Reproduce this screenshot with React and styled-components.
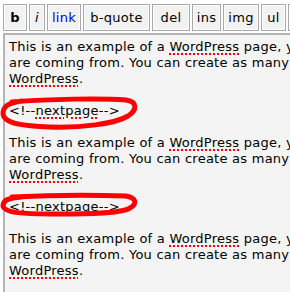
import styled, { createGlobalStyle } from "styled-components";

const GlobalStyle = createGlobalStyle`
  html, body {
    margin: 0;
    padding: 0;
    background: #ffffff;
    overflow: hidden;
  }
`;

const buttons = [
  { label: "b", kind: "bold", width: 24 },
  { label: "i", kind: "italic", width: 16 },
  { label: "link", kind: "link", width: 34 },
  { label: "b-quote", width: 67 },
  { label: "del", width: 38 },
  { label: "ins", width: 29 },
  { label: "img", width: 36 },
  { label: "ul", width: 25 },
  { label: "ol", width: 25 },
];

function Paragraph() {
  return (
    <>
      <Line>
        This is an example of a <Misspelt>WordPress</Misspelt> page, you could edit this
      </Line>
      <Line>are coming from. You can create as many pages like this one</Line>
      <Line>
        <Misspelt>WordPress</Misspelt>.
      </Line>
    </>
  );
}

function NextPage({ tall }) {
  return (
    <Marked>
      <Line>
        &lt;!--<Misspelt>nextpage</Misspelt>--&gt;
      </Line>
      {tall ? (
        <Scribble $top={-7} $h={34} viewBox="0 0 138 34">
          <path d="M12 6 C50 3 100 2 126 4 C138 6 137 14 128 20 C115 28 80 32 50 31 C25 30 4 28 3 18 C3 10 8 7 22 5" />
        </Scribble>
      ) : (
        <Scribble $top={-6} $h={24} viewBox="0 0 138 24">
          <path d="M12 4 C50 2 100 2 126 3 C137 5 137 11 130 15 C120 21 80 21 50 21 C25 21 4 20 3 13 C3 7 8 5 22 4" />
        </Scribble>
      )}
    </Marked>
  );
}

export default function App() {
  return (
    <>
      <GlobalStyle />
      <Page>
        <Toolbar>
          {buttons.map((b) => (
            <Button key={b.label} $kind={b.kind} $w={b.width}>
              {b.label}
            </Button>
          ))}
        </Toolbar>
        <Editor>
          <Paragraph />
          <Blank />
          <NextPage tall />
          <Blank />
          <Paragraph />
          <Blank />
          <NextPage />
          <Blank />
          <Paragraph />
        </Editor>
      </Page>
    </>
  );
}

const Page = styled.div`
  width: 290px;
  height: 292px;
  overflow: hidden;
  padding: 4px 0 0 3px;
  box-sizing: border-box;
  font-family: "DejaVu Sans", Verdana, sans-serif;
`;

const Toolbar = styled.div`
  display: flex;
  gap: 2px;
  white-space: nowrap;
`;

const Button = styled.div`
  flex: none;
  width: ${(p) => p.$w}px;
  height: 27px;
  box-sizing: border-box;
  display: flex;
  align-items: center;
  justify-content: center;
  background: #f2f2f2;
  border: 1px solid #a8a8a8;
  box-shadow: inset 0 0 0 1px #ffffff;
  font-size: 13px;
  letter-spacing: 0.3px;
  color: ${(p) => (p.$kind === "link" ? "#0000ee" : "#000000")};
  font-weight: ${(p) => (p.$kind === "bold" ? "bold" : "normal")};
  font-style: ${(p) => (p.$kind === "italic" ? "italic" : "normal")};
`;

const Editor = styled.div`
  margin-top: 2px;
  width: 400px;
  height: 300px;
  box-sizing: border-box;
  background: #f4f4f4;
  border-top: 2px solid #b4b4b4;
  border-left: 2px solid #b4b4b4;
  padding: 4px 0 0 4px;
  font-size: 13px;
  line-height: 16px;
  letter-spacing: 0.25px;
  color: #000000;
`;

const Line = styled.div`
  white-space: nowrap;
  height: 16px;
`;

const Blank = styled.div`
  height: 16px;
`;

const Misspelt = styled.span`
  text-decoration: underline dotted #ff0000;
  text-decoration-thickness: 2px;
  text-underline-offset: 2px;
`;

const Marked = styled.div`
  position: relative;
`;

const Scribble = styled.svg`
  position: absolute;
  left: -9px;
  top: ${(p) => p.$top}px;
  width: 138px;
  height: ${(p) => p.$h}px;
  overflow: visible;
  fill: none;
  stroke: #ff0000;
  stroke-width: 5;
  stroke-linecap: round;
  stroke-linejoin: round;
`;
